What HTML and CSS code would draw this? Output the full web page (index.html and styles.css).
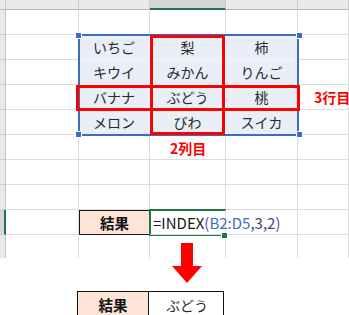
FILE: index.html
```html
<!DOCTYPE html>
<html lang="ja">
<head>
<meta charset="utf-8">
<title>INDEX</title>
<link rel="stylesheet" href="styles.css">
</head>
<body>
<div class="page">
  <div class="sheet">
    <div class="grid">
      <div class="hd corner"></div>
      <div class="hd col"><span>A</span></div>
      <div class="hd col"><span>B</span></div>
      <div class="hd col sel"><span>C</span></div>
      <div class="hd col"><span>D</span></div>
      <div class="hd col"><span>E</span></div>

      <div class="rh"></div><div class="c"></div><div class="c"></div><div class="c"></div><div class="c"></div><div class="c"></div>

      <div class="rh"></div><div class="c"></div><div class="c t">いちご</div><div class="c t">梨</div><div class="c t">柿</div><div class="c"></div>
      <div class="rh"></div><div class="c"></div><div class="c t">キウイ</div><div class="c t">みかん</div><div class="c t">りんご</div><div class="c"></div>
      <div class="rh"></div><div class="c"></div><div class="c t">バナナ</div><div class="c t">ぶどう</div><div class="c t">桃</div><div class="c"></div>
      <div class="rh"></div><div class="c"></div><div class="c t tb">メロン</div><div class="c t tb">びわ</div><div class="c t tb">スイカ</div><div class="c"></div>

      <div class="rh"></div><div class="c"></div><div class="c"></div><div class="c"></div><div class="c"></div><div class="c"></div>
      <div class="rh"></div><div class="c"></div><div class="c"></div><div class="c"></div><div class="c"></div><div class="c"></div>
      <div class="rh"></div><div class="c"></div><div class="c"></div><div class="c"></div><div class="c"></div><div class="c"></div>

      <div class="rh rsel"></div><div class="c"></div><div class="c label">結果</div><div class="c formula"><span class="fk">=INDEX</span><span class="fp">(</span><span class="fr">B2:D5</span><span class="fa">,3,2</span><span class="fp">)</span></div><div class="c"></div><div class="c"></div>

      <div class="rh"></div><div class="c"></div><div class="c"></div><div class="c"></div><div class="c"></div><div class="c"></div>
    </div>

    <div class="range"></div>
    <div class="handle h1"></div>
    <div class="handle h2"></div>
    <div class="handle h3"></div>
    <div class="handle h4"></div>

    <div class="mark mark-col"></div>
    <div class="mark mark-row"></div>
    <div class="note note-row">3行目</div>
    <div class="note note-col">2列目</div>

    <div class="active"></div>
    <div class="fill-handle"></div>
  </div>

  <svg class="arrow" width="30" height="40" viewBox="0 0 30 40">
    <polygon points="9,0 21,0 21,23 30,23 15,40 0,23 9,23" fill="#ff0000"/>
  </svg>

  <div class="result">
    <div class="r-label">結果</div>
    <div class="r-value">ぶどう</div>
  </div>
</div>
</body>
</html>
```

FILE: styles.css
```css
html, body {
  margin: 0;
  padding: 0;
  background: #ffffff;
}

body {
  width: 349px;
  height: 315px;
  overflow: hidden;
  font-family: "Noto Sans CJK JP", "Noto Sans", sans-serif;
  color: #222;
}

.page {
  position: relative;
  width: 349px;
  height: 315px;
}

.sheet {
  position: relative;
  height: 258px;
  overflow: hidden;
}

.grid {
  display: grid;
  grid-template-columns: 6px 73px 71px 76px 72px 51px;
  grid-template-rows: 10px repeat(10, 25px);
}

.grid > div {
  box-sizing: border-box;
}

.hd {
  background: #e9e9e9;
  border-bottom: 1px solid #b8b8b8;
  border-right: 1px solid #c9c9c9;
  overflow: hidden;
  display: flex;
  justify-content: center;
}

.hd span {
  font-family: "Noto Sans", sans-serif;
  font-size: 13px;
  line-height: 14px;
  margin-top: -12px;
  color: #555;
}

.hd.sel {
  background: #d6d6d6;
  border-bottom: 2px solid #217346;
}

.hd.sel span {
  color: #217346;
}

.rh {
  background: #e9e9e9;
  border-right: 1px solid #c2c2c2;
  border-bottom: 1px solid #cfcfcf;
}

.rh.rsel {
  background: #d6d6d6;
  border-right: 2px solid #217346;
}

.c {
  border-right: 1px solid #dcdcdc;
  border-bottom: 1px solid #dcdcdc;
}

.t {
  background: #e9eef7;
  border-color: #f4f6fa;
  display: flex;
  align-items: center;
  justify-content: center;
  font-size: 14px;
  color: #2a2a2a;
}

.label {
  background: #fce4d6;
  border: 1px solid #1a1a1a;
  display: flex;
  align-items: center;
  justify-content: center;
  font-size: 14.5px;
  font-weight: bold;
  color: #111;
}

.formula {
  display: flex;
  align-items: center;
  white-space: nowrap;
  overflow: visible;
  padding-left: 3px;
  font-size: 15px;
  position: relative;
  z-index: 2;
}

.fk { color: #1a1a1a; }
.fp { color: #7a3d9c; }
.fr { color: #3a6dc5; }
.fa { color: #3c4a6a; }

.range {
  position: absolute;
  left: 78px;
  top: 34px;
  width: 221px;
  height: 102px;
  box-sizing: border-box;
  border: 2px solid #3a6dc5;
}

.handle {
  position: absolute;
  width: 5px;
  height: 5px;
  background: #3a6dc5;
  outline: 1px solid #ffffff;
}

.h1 { left: 76px; top: 33px; }
.h2 { left: 297px; top: 33px; }
.h3 { left: 76px; top: 132px; }
.h4 { left: 297px; top: 132px; }

.mark {
  position: absolute;
  box-sizing: border-box;
  border: 3px solid #ff0000;
}

.mark-col {
  left: 150px;
  top: 35px;
  width: 75px;
  height: 100px;
}

.mark-row {
  left: 76px;
  top: 85px;
  width: 224px;
  height: 26px;
}

.note {
  position: absolute;
  color: #ff0000;
  font-weight: bold;
  font-size: 14px;
  line-height: 18px;
  white-space: nowrap;
}

.note-row {
  left: 314px;
  top: 88px;
}

.note-col {
  left: 170px;
  top: 139px;
}

.active {
  position: absolute;
  left: 149px;
  top: 209px;
  width: 77px;
  height: 27px;
  box-sizing: border-box;
  border: 2px solid #217346;
  border-right: none;
  z-index: 1;
}

.fill-handle {
  position: absolute;
  left: 222px;
  top: 233px;
  width: 5px;
  height: 5px;
  background: #217346;
  outline: 1px solid #ffffff;
  z-index: 3;
}

.arrow {
  position: absolute;
  left: 172px;
  top: 243px;
}

.result {
  display: grid;
  grid-template-columns: 71px 76px;
  height: 27px;
  margin: 33px 0 0 77px;
  width: 147px;
  box-sizing: border-box;
  border: 1px solid #111;
}

.r-label {
  background: #fce4d6;
  border-right: 1px solid #111;
  display: flex;
  align-items: center;
  justify-content: center;
  font-size: 14.5px;
  font-weight: bold;
  color: #111;
}

.r-value {
  display: flex;
  align-items: center;
  justify-content: center;
  font-size: 14px;
  color: #2a2a2a;
}
```
